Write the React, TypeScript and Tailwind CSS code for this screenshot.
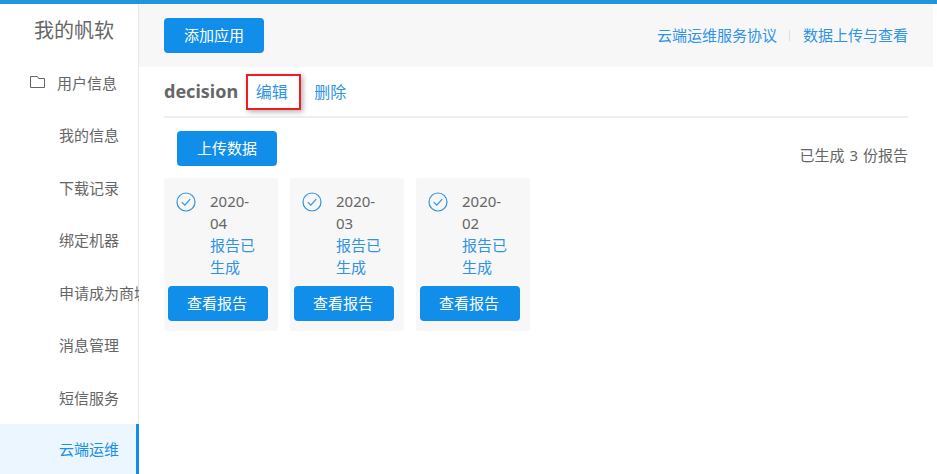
const menuItems = ['我的信息', '下载记录', '绑定机器', '申请成为商城', '消息管理', '短信服务']

const reports = [
  { year: '2020-', month: '04' },
  { year: '2020-', month: '03' },
  { year: '2020-', month: '02' },
]

function CheckCircle() {
  return (
    <svg viewBox="0 0 20 20" className="h-5 w-5 shrink-0" fill="none" stroke="#2f93e6" strokeWidth="1.2">
      <circle cx="10" cy="10" r="9" />
      <path d="M5.8 10.2 l3 3 l5.4 -6" />
    </svg>
  )
}

function FolderIcon() {
  return (
    <svg viewBox="0 0 15 12" className="mr-[12px] h-3 w-[15px] -translate-y-px" fill="none" stroke="#666666" strokeWidth="1">
      <path d="M0.5 0.5 H7.5 L8.5 2.5 H14.5 V11.5 H0.5 Z" />
    </svg>
  )
}

function BlueButton({ label, className = '' }: { label: string; className?: string }) {
  return (
    <button className={`flex h-[35px] w-[100px] shrink-0 items-center justify-center rounded-[4px] bg-[#118ee9] text-[15px] text-white ${className}`}>
      {label}
    </button>
  )
}

function ReportCard({ year, month }: { year: string; month: string }) {
  return (
    <div className="flex h-[153px] w-[114px] flex-col rounded-[2px] bg-[#f7f7f7]">
      <div className="flex h-[108px] pt-[12px] pl-[12px] text-[15px] leading-[22px]">
        <div className="pt-[2px]">
          <CheckCircle />
        </div>
        <div className="ml-[14px] w-[60px]">
          <div className="text-[#666666]">{year}</div>
          <div className="text-[#666666]">{month}</div>
          <div className="text-[#2f93e6]">报告已</div>
          <div className="text-[#2f93e6]">生成</div>
        </div>
      </div>
      <BlueButton label="查看报告" className="ml-[4px] pr-[2px]" />
    </div>
  )
}

export default function App() {
  return (
    <div className="flex h-[474px] w-[937px] flex-col overflow-hidden bg-white font-['Noto_Sans','Noto_Sans_CJK_SC',sans-serif] text-[#666666]">
      <div className="h-1 shrink-0 bg-[#2196e0]" />
      <div className="flex min-h-0 flex-1">
        <aside className="flex w-[139px] shrink-0 flex-col overflow-hidden shadow-[inset_-1px_0_0_#e8e8e8]">
          <div className="flex h-[53px] shrink-0 items-center pt-px pl-[34px] text-[20px]">我的帆软</div>
          <div className="flex h-[52px] shrink-0 items-center pl-[30px] text-[15px]">
            <FolderIcon />
            <span>用户信息</span>
          </div>
          {menuItems.map((item) => (
            <div key={item} className="flex h-[52.5px] shrink-0 items-center overflow-hidden whitespace-nowrap pr-px pl-[59px] text-[15px]">
              {item}
            </div>
          ))}
          <div className="flex h-[50px] shrink-0 items-center border-r-[3px] border-[#118ee9] bg-[#ebf6fe] pl-[59px] text-[15px] text-[#1a8fe8]">
            云端运维
          </div>
        </aside>
        <main className="min-w-0 flex-1">
          <div className="mr-1 flex h-[63px] items-center justify-between bg-[#f7f7f7] px-[25px]">
            <BlueButton label="添加应用" />
            <div className="flex items-center text-[15px] text-[#2f93e6]">
              <span>云端运维服务协议</span>
              <span className="mr-[13px] ml-3 h-[11px] w-px bg-[#dddddd]" />
              <span>数据上传与查看</span>
            </div>
          </div>
          <div className="mr-[29px] ml-[25px]">
            <div className="flex h-[51px] items-center border-b-2 border-[#eeeeee]">
              <span className="text-[18px] font-bold">decision</span>
              <span className="ml-[8px] flex h-9 w-[55px] items-center justify-center border-2 border-[#f01c24] pr-[4px] text-[16px] text-[#2f93e6] shadow-[2px_2px_5px_rgba(0,0,0,0.3)]">
                编辑
              </span>
              <span className="ml-[13px] text-[16px] text-[#2f93e6]">删除</span>
            </div>
            <div className="flex items-start justify-between pt-[13px]">
              <BlueButton label="上传数据" className="ml-[13px]" />
              <span className="pt-[13px] text-[15px] [word-spacing:1px]">已生成 3 份报告</span>
            </div>
            <div className="mt-[11px] flex gap-3">
              {reports.map((report) => (
                <ReportCard key={report.month} year={report.year} month={report.month} />
              ))}
            </div>
          </div>
        </main>
      </div>
    </div>
  )
}
